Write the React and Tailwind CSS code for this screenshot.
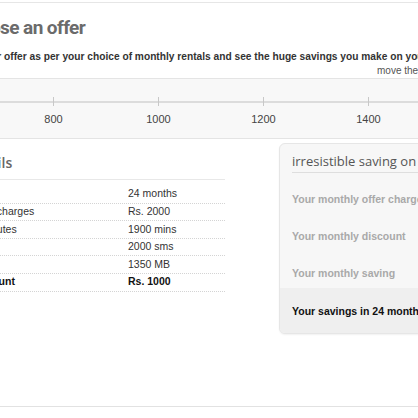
const ticks = ['800', '1000', '1200', '1400', '1600'];

const rows = [
  { label: 'Validity', value: '24 months' },
  { label: 'Monthly rental charges', value: 'Rs. 2000' },
  { label: 'Free voice minutes', value: '1900 mins' },
  { label: 'Free SMS', value: '2000 sms' },
  { label: 'Free data', value: '1350 MB' },
  { label: 'Monthly discount', value: 'Rs. 1000', bold: true },
];

const savings = ['Your monthly offer charges', 'Your monthly discount', 'Your monthly saving'];

export default function App() {
  return (
    <div className="w-[418px] h-[418px] overflow-hidden bg-white flex flex-col font-['Liberation_Sans',Arial,sans-serif]">
      <div className="mt-[2px] border-t border-[#e6e6e6] h-[76px] flex flex-col">
        <h1 className="mt-[13px] ml-[-42px] whitespace-nowrap text-[19px] leading-[24px] font-bold tracking-[-0.6px] text-[#6b6b6b] font-['Roboto',sans-serif]">
          Choose an offer
        </h1>
        <p className="mt-[10px] ml-[-61px] whitespace-nowrap text-[10.2px] leading-[14px] font-bold text-[#333]">
          Choose your offer as per your choice of monthly rentals and see the huge savings you make on your bill
        </p>
        <p className="mt-0 pl-[377px] whitespace-nowrap text-[10px] leading-[13px] text-[#555]">
          move the slider to pick your offer
        </p>
      </div>

      <div className="h-[61px] bg-[#f8f8f8] border-y border-[#e4e4e4] flex flex-col">
        <div className="mt-[22px] h-[2px] bg-[#dcdcdc]" />
        <div className="mt-[-6px] ml-px flex">
          {ticks.map((t) => (
            <div key={t} className="w-[105px] shrink-0 flex flex-col items-center">
              <div className="w-px h-[9px] bg-[#c8c8c8]" />
              <span className="mt-[6px] text-[11px] leading-[14px] text-[#444]">{t}</span>
            </div>
          ))}
        </div>
      </div>

      <div className="flex mt-[6px]">
        <div className="w-[297px] ml-[-72px] shrink-0 flex flex-col">
          <h2 className="mt-[9px] ml-[6px] whitespace-nowrap text-[14px] leading-[18px] font-semibold text-[#666] font-['Open_Sans',sans-serif]">
            Plan details
          </h2>
          <div className="mt-[7px] border-t border-[#e8e8e8] pt-[6px]">
            {rows.map((r) => (
              <div
                key={r.label}
                className={`flex items-center h-[17.6px] border-b border-dotted border-[#d4d4d4] text-[10.5px] ${r.bold ? 'font-bold text-[#111]' : 'text-[#333]'}`}
              >
                <span className="w-[200px] shrink-0 whitespace-nowrap">{r.label}</span>
                <span className="whitespace-nowrap">{r.value}</span>
              </div>
            ))}
          </div>
        </div>

        <div className="ml-[54px] mt-[-2px] w-[300px] shrink-0 h-[191px] rounded-md border border-[#e6e6e6] bg-[#f7f7f7] shadow-[0_1px_2px_rgba(0,0,0,0.06)] flex flex-col overflow-hidden">
          <div className="mx-[12px] mt-[7px] pb-[1px] border-b border-[#dedede]">
            <h3 className="whitespace-nowrap text-[13px] leading-[20px] text-[#555] font-['Open_Sans',sans-serif]">
              irresistible saving on your offer
            </h3>
          </div>
          <div className="flex flex-col flex-1">
            {savings.map((s) => (
              <div key={s} className="h-[37px] flex items-center pl-[12px] pt-[16px] whitespace-nowrap text-[10.5px] font-bold text-[#a9a9a9]">
                {s}
              </div>
            ))}
            <div className="mt-auto h-[45px] bg-[#efefef] flex items-center pl-[12px] pt-[3px] whitespace-nowrap text-[10.5px] font-bold text-[#111]">
              Your savings in 24 months
            </div>
          </div>
        </div>
      </div>

      <div className="mt-auto mb-[11px] border-t border-[#e2e2e2]" />
    </div>
  );
}
